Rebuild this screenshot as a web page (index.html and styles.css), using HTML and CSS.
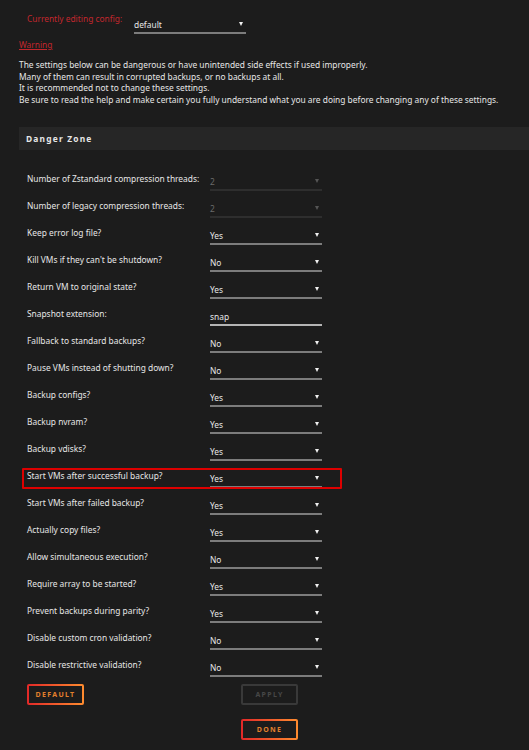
FILE: index.html
```html
<!DOCTYPE html>
<html lang="en">
<head>
    <meta charset="UTF-8">
    <title>Danger Zone</title>
    <link rel="stylesheet" href="styles.css">
</head>
<body>
    <div class="config">
        <span class="config-label">Currently editing config:</span>
        <div class="select config-select"><span>default</span><i class="arrow"></i></div>
    </div>

    <a class="warning" href="#">Warning</a>
    <p class="notice">
        The settings below can be dangerous or have unintended side effects if used improperly.<br>
        Many of them can result in corrupted backups, or no backups at all.<br>
        It is recommended not to change these settings.<br>
        Be sure to read the help and make certain you fully understand what you are doing before changing any of these settings.
    </p>

    <div class="title">Danger Zone</div>

    <div class="settings">
        <div class="row"><label>Number of Zstandard compression threads:</label><div class="select disabled"><span>2</span><i class="arrow"></i></div></div>
        <div class="row"><label>Number of legacy compression threads:</label><div class="select disabled"><span>2</span><i class="arrow"></i></div></div>
        <div class="row"><label>Keep error log file?</label><div class="select"><span>Yes</span><i class="arrow"></i></div></div>
        <div class="row"><label>Kill VMs if they can't be shutdown?</label><div class="select"><span>No</span><i class="arrow"></i></div></div>
        <div class="row"><label>Return VM to original state?</label><div class="select"><span>Yes</span><i class="arrow"></i></div></div>
        <div class="row"><label>Snapshot extension:</label><div class="select input"><span>snap</span></div></div>
        <div class="row"><label>Fallback to standard backups?</label><div class="select"><span>No</span><i class="arrow"></i></div></div>
        <div class="row"><label>Pause VMs instead of shutting down?</label><div class="select"><span>No</span><i class="arrow"></i></div></div>
        <div class="row"><label>Backup configs?</label><div class="select"><span>Yes</span><i class="arrow"></i></div></div>
        <div class="row"><label>Backup nvram?</label><div class="select"><span>Yes</span><i class="arrow"></i></div></div>
        <div class="row"><label>Backup vdisks?</label><div class="select"><span>Yes</span><i class="arrow"></i></div></div>
        <div class="row highlight"><label>Start VMs after successful backup?</label><div class="select"><span>Yes</span><i class="arrow"></i></div></div>
        <div class="row"><label>Start VMs after failed backup?</label><div class="select"><span>Yes</span><i class="arrow"></i></div></div>
        <div class="row"><label>Actually copy files?</label><div class="select"><span>Yes</span><i class="arrow"></i></div></div>
        <div class="row"><label>Allow simultaneous execution?</label><div class="select"><span>No</span><i class="arrow"></i></div></div>
        <div class="row"><label>Require array to be started?</label><div class="select"><span>Yes</span><i class="arrow"></i></div></div>
        <div class="row"><label>Prevent backups during parity?</label><div class="select"><span>Yes</span><i class="arrow"></i></div></div>
        <div class="row"><label>Disable custom cron validation?</label><div class="select"><span>No</span><i class="arrow"></i></div></div>
        <div class="row"><label>Disable restrictive validation?</label><div class="select"><span>No</span><i class="arrow"></i></div></div>
    </div>

    <div class="buttons">
        <button class="btn">Default</button>
        <button class="btn off">Apply</button>
    </div>
    <div class="buttons done">
        <button class="btn">Done</button>
    </div>
</body>
</html>
```

FILE: styles.css
```css
body {
    margin: 0;
    background-color: #1c1c1c;
    color: #e6e6e6;
    font-family: "Noto Sans", Arial, sans-serif;
    font-size: 8.4px;
}
.config {
    display: flex;
    align-items: flex-start;
    padding: 13px 0 0 27px;
    height: 19px;
}
.config-label {
    color: #c1272d;
    width: 107px;
    line-height: 12px;
}
.config-select {
    width: 112px;
    margin-top: 1px;
}
.warning {
    display: inline-block;
    margin: 7px 0 0 19px;
    color: #c1272d;
    text-decoration: underline;
    line-height: 12px;
}
.notice {
    margin: 8px 0 0 19px;
    line-height: 11.6px;
}
.title {
    margin: 22px 0 0 19px;
    height: 23px;
    line-height: 23px;
    padding-left: 7px;
    background: #262626;
    font-weight: bold;
    letter-spacing: 1.2px;
}
.settings {
    margin: 20px 0 0 27px;
}
.row {
    position: relative;
    display: flex;
    height: 27px;
}
.row label {
    width: 183px;
    padding-top: 2px;
    line-height: 14px;
}
.select {
    position: relative;
    display: flex;
    align-items: center;
    width: 112px;
    height: 18px;
    margin-top: 3px;
    border-bottom: 2px solid #7c7c7c;
    box-sizing: border-box;
}
.select span {
    flex: 1;
}
.select.input {
    border-bottom-color: #b4b4b4;
}
.select.disabled {
    color: #6a6a6a;
    border-bottom-color: #2e2e2e;
}
.arrow {
    width: 0;
    height: 0;
    margin-right: 3px;
    border-left: 2.5px solid transparent;
    border-right: 2.5px solid transparent;
    border-top: 4px solid #f0f0f0;
}
.disabled .arrow {
    border-top-color: #555;
}
.highlight::after {
    content: "";
    position: absolute;
    left: -5px;
    top: 1px;
    width: 316px;
    height: 17px;
    border: 2px solid #d00;
    border-radius: 1px;
}
.buttons {
    display: flex;
    gap: 157px;
    padding-left: 27px;
    margin-top: 1px;
}
.buttons.done {
    margin-top: 14px;
    padding-left: 241px;
}
.btn {
    width: 57px;
    height: 21px;
    padding: 0;
    border: 2px solid transparent;
    border-radius: 2px;
    background: linear-gradient(#1c1c1c, #1c1c1c) padding-box,
                linear-gradient(90deg, #e22828, #ff8c2f) border-box;
    color: #e3802c;
    font-family: "Noto Sans", Arial, sans-serif;
    font-size: 7px;
    font-weight: bold;
    letter-spacing: 1.3px;
    text-transform: uppercase;
}
.btn.off {
    background: #1c1c1c;
    border-color: #393939;
    color: #474747;
}
```
